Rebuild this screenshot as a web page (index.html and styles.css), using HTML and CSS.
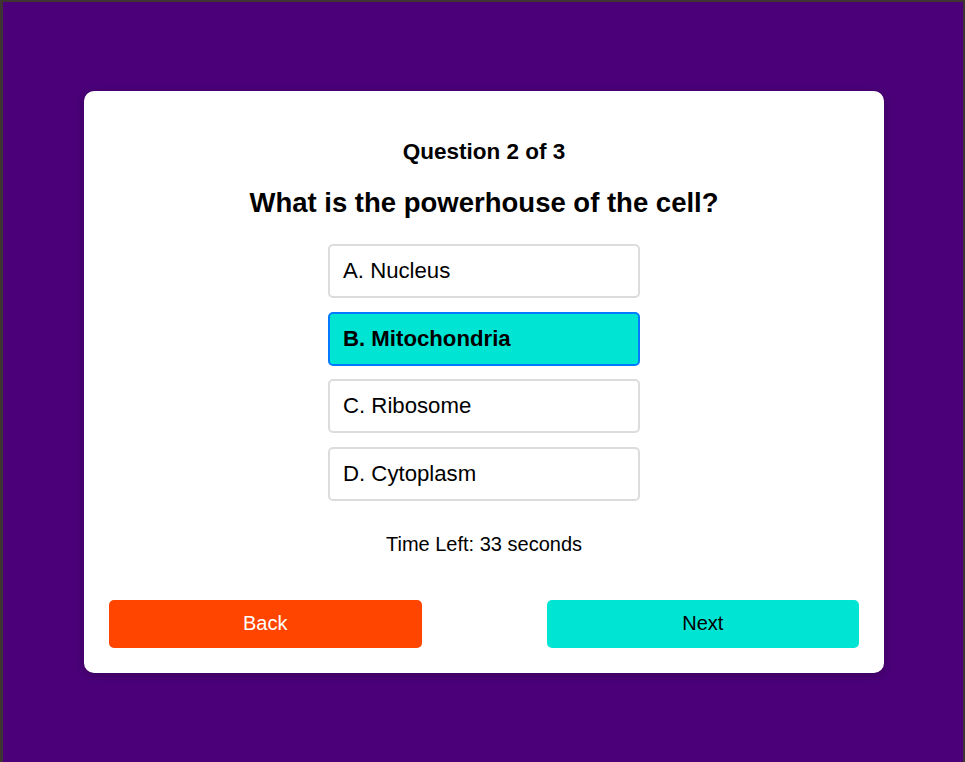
FILE: index.html
```html
<!DOCTYPE html>
<html>
<head>
<meta charset="utf-8">
<link rel="stylesheet" href="styles.css">
</head>
<body>
<div class="frame">
  <div class="card">
    <div class="counter">Question 2 of 3</div>
    <div class="question">What is the powerhouse of the cell?</div>
    <div class="options">
      <div class="option">A. Nucleus</div>
      <div class="option selected">B. Mitochondria</div>
      <div class="option">C. Ribosome</div>
      <div class="option">D. Cytoplasm</div>
    </div>
    <div class="timer">Time Left: 33 seconds</div>
    <div class="nav">
      <button class="btn back">Back</button>
      <button class="btn next">Next</button>
    </div>
  </div>
</div>
</body>
</html>
```
FILE: styles.css
```css
html, body {
  margin: 0;
  padding: 0;
  height: 100%;
}
body {
  font-family: "Liberation Sans", Arial, sans-serif;
  background: #4b0079;
}
.frame {
  box-sizing: border-box;
  height: 762px;
  border-style: solid;
  border-color: #3e3432;
  border-width: 2px 2px 0 3px;
  background: #4b0079;
  padding-top: 89px;
  padding-left: 81px;
}
.card {
  box-sizing: border-box;
  width: 800px;
  height: 582px;
  background: #fff;
  border-radius: 10px;
  box-shadow: 0 2px 8px rgba(0, 0, 0, 0.25);
  padding: 25px;
  display: flex;
  flex-direction: column;
  align-items: center;
}
.counter {
  font-size: 22.5px;
  font-weight: bold;
  margin-top: 23px;
  line-height: 26px;
  color: #000;
}
.question {
  font-size: 27.5px;
  font-weight: bold;
  margin-top: 22px;
  line-height: 32px;
  color: #000;
}
.options {
  display: flex;
  flex-direction: column;
  gap: 13.67px;
  margin-top: 25px;
}
.option {
  box-sizing: border-box;
  width: 312px;
  height: 54px;
  border: 2px solid #dcdcdc;
  border-radius: 5px;
  padding: 0 13px;
  display: flex;
  align-items: center;
  font-size: 22.2px;
  color: #000;
}
.option.selected {
  background: #00e5d3;
  border-color: #007bff;
  font-weight: bold;
}
.timer {
  margin-top: 32px;
  font-size: 20px;
  line-height: 23px;
  color: #000;
}
.nav {
  margin-top: auto;
  width: 100%;
  display: flex;
  justify-content: space-between;
}
.btn {
  width: 312.5px;
  height: 48px;
  border: none;
  border-radius: 5px;
  font-family: "Liberation Sans", Arial, sans-serif;
  font-size: 20px;
  padding: 0 0 2px;
}
.back {
  background: #ff4500;
  color: #fff;
}
.next {
  background: #00e5d3;
  color: #000;
}
```
